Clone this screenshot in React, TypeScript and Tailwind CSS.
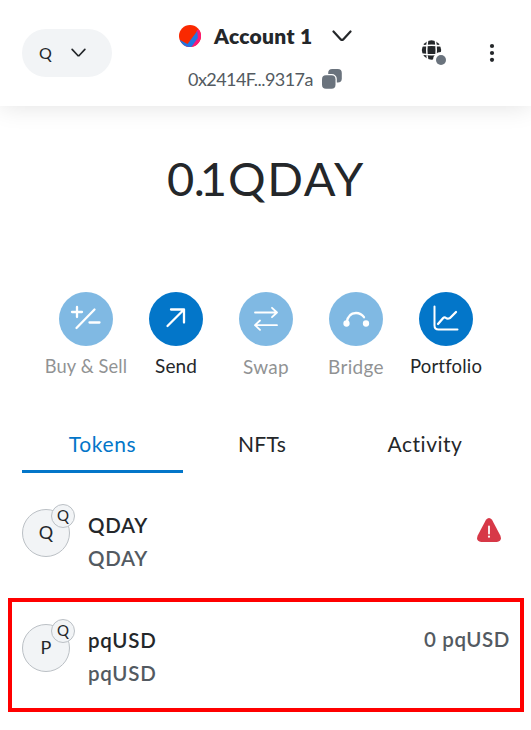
import React from "react";

function Chevron({ width }: { width: number }) {
  return (
    <svg width={width} height={width / 2 + 2} viewBox="0 0 20 12" fill="none" stroke="#24272a" strokeWidth="2.2" strokeLinecap="round" strokeLinejoin="round">
      <path d="M1.5 1.5 8.8 9.4Q10 10.6 11.2 9.4L18.5 1.5" />
    </svg>
  );
}

function Action({ label, disabled, spacing, children }: { label: string; disabled?: boolean; spacing: string; children: React.ReactNode }) {
  return (
    <div className={`flex w-[90px] flex-col items-center ${disabled ? "opacity-50" : ""}`}>
      <div className="flex size-[54px] items-center justify-center rounded-full bg-[#0376c9]">
        <svg width="54" height="54" viewBox="0 0 54 54" fill="none" stroke="white" strokeWidth="2.3" strokeLinecap="round" strokeLinejoin="round">
          {children}
        </svg>
      </div>
      <span className={`whitespace-nowrap leading-6 ${spacing}`}>{label}</span>
    </div>
  );
}

function TokenRow({ letter, name, spacing, children }: { letter: string; name: string; spacing: string; children: React.ReactNode }) {
  return (
    <div className="flex h-[115px] items-start pl-[22px] pr-[22px]">
      <div className="relative mt-[11px] flex size-12 items-center justify-center rounded-full border border-[#bbc0c5] bg-[#f2f4f6] pb-0.5 text-[18px]">
        {letter}
        <span className="absolute -top-[6px] left-[28px] flex size-6 items-center justify-center rounded-full border border-[#bbc0c5] bg-[#f2f4f6] pb-0.5 text-[15px]">Q</span>
      </div>
      <div className={`ml-[18px] mt-[11px] flex flex-col text-[20.5px] font-semibold leading-[33px] ${spacing}`}>
        <span>{name}</span>
        <span className="text-[#535a61]">{name}</span>
      </div>
      <div className="ml-auto mt-[11px]">{children}</div>
    </div>
  );
}

export default function App() {
  return (
    <div className="relative h-[730px] w-[531px] overflow-hidden bg-white font-['Lato','Liberation_Sans',sans-serif] text-[#24272a]">
      <header className="relative flex h-[106px] bg-white shadow-[0_0_24px_rgba(0,0,0,0.12)]">
        <div className="ml-[22px] mt-[29px] flex h-12 w-[90px] items-center rounded-full bg-[#f2f4f6] pl-[17px]">
          <span className="w-[14px] pb-px text-[16px]">Q</span>
          <span className="ml-[18px]"><Chevron width={15} /></span>
        </div>
        <div className="ml-[67px] w-[190px]">
          <div className="mt-[22px] flex h-7 items-center">
            <svg width="22" height="22" viewBox="0 0 22 22">
              <defs><clipPath id="avatar"><circle cx="11" cy="11" r="11" /></clipPath></defs>
              <g clipPath="url(#avatar)">
                <path fill="#fa2900" d="M0 0h22v22H0z" />
                <path fill="#fb1879" d="M18 5 22 4V22H6L15 14z" />
                <path fill="#2376e1" d="M18.3 6 18.8 13 12.5 22H4L0 14.5 8.5 19z" />
              </g>
            </svg>
            <span className="ml-[13px] w-[98px] whitespace-nowrap text-[21px] font-extrabold tracking-[0.3px]">Account 1</span>
            <span className="ml-[20px]"><Chevron width={20} /></span>
          </div>
          <div className="ml-[9px] mt-[15px] flex h-7 items-center text-[#535a61]">
            <span className="w-[126px] whitespace-nowrap text-[18px] tracking-[-0.55px]">0x2414F...9317a</span>
            <svg width="20" height="20" viewBox="0 0 20 20" className="ml-[8px]">
              <rect x="6.2" y="0" width="13.6" height="13.6" rx="4" fill="#6a737d" />
              <rect x="-1.2" y="5" width="16" height="16" rx="5" fill="white" />
              <rect y="6.2" width="13.5" height="13.5" rx="4" fill="#6a737d" />
            </svg>
          </div>
        </div>
        <div className="ml-[52px] mt-[40px]">
          <svg width="26" height="26" viewBox="0 0 26 26">
            <circle cx="10.5" cy="10" r="9.7" fill="#24272a" />
            <path d="M6.7 0Q4.8 10 6.7 20M14.3 0Q16.2 10 14.3 20M0 6.1Q10.5 4.5 21 6.1M0 13.9Q10.5 15.5 21 13.9" stroke="white" strokeWidth="1.5" fill="none" />
            <circle cx="20" cy="20" r="8" fill="white" />
            <circle cx="20" cy="20" r="5" fill="#6a737d" />
          </svg>
        </div>
        <svg width="6" height="20" viewBox="0 0 6 20" className="ml-[42px] mt-[43px]" fill="#24272a">
          <circle cx="3" cy="3" r="2.1" /><circle cx="3" cy="10" r="2.1" /><circle cx="3" cy="16.8" r="2.1" />
        </svg>
      </header>

      <main>
        <div className="flex h-[186px] pl-[167px] pt-[42px] text-[47px] leading-[60px]">
          <span className="w-[61px] whitespace-nowrap"><span className="tracking-[-0.5px]">0</span><span className="tracking-[-5px]">.</span><span className="tracking-[-2px]">1</span></span>
          <span className="tracking-[1.7px]">QDAY</span>
        </div>
        <section className="flex h-[88px] pl-[41px]">
          <Action label="Buy & Sell" disabled spacing="mt-[8px] text-[18.3px] tracking-[0.1px]">
            <path d="M13 20h10M18 15v10M17.5 36 35.5 17.5M30.5 30.5h10" />
          </Action>
          <Action label="Send" spacing="mt-[8px] text-[19px] tracking-[0.1px]">
            <path d="M18.5 34 35 17.5M22 17.5h13v13" />
          </Action>
          <Action label="Swap" disabled spacing="mt-[9px] text-[19px] tracking-[0.3px]">
            <path strokeWidth="1.8" d="M16 20.5h22M33 15.8l5 4.7-5 4.7M38 33.2H16M21 28.5l-5 4.7 5 4.7" />
          </Action>
          <Action label="Bridge" disabled spacing="mt-[9px] text-[19px] tracking-[0.3px]">
            <path d="M17.5 31Q19 21 27 21Q32 21 35 25.2" />
            <circle cx="17.5" cy="31.5" r="2" fill="white" /><circle cx="37" cy="31.5" r="2" fill="white" />
          </Action>
          <Action label="Portfolio" spacing="mt-[8px] text-[18.5px] tracking-[0.2px]">
            <path strokeWidth="2" d="M15.5 14.5v19q0 4 4 4H38.5" />
            <path d="M19 32 24.2 26Q25.5 24.7 27 26T31 26L37 20" />
          </Action>
        </section>

        <nav className="mt-[38px] flex h-[55px] pl-[22px] text-[21px] leading-[52px]">
          <div className="w-[161px] border-b-[3px] border-[#0376c9] text-center tracking-[0.6px] text-[#0376c9]">Tokens</div>
          <div className="w-[158px] text-center tracking-[0.3px]">NFTs</div>
          <div className="w-[168px] text-center tracking-[0.5px]">Activity</div>
        </nav>

        <section className="pt-[25px]">
          <TokenRow letter="Q" name="QDAY" spacing="tracking-[0.7px]">
            <svg width="24" height="24" viewBox="0 0 24 24" className="mr-[8px] mt-[9px]">
              <path d="M9 1.8Q12-1.8 15 1.8L23.3 17.5Q25.5 23 19.8 24H4.2Q-1.5 23 .7 17.5z" fill="#d73847" />
              <path d="M12 8.5v7" stroke="white" strokeWidth="1.8" strokeLinecap="round" /><circle cx="12" cy="18.7" r="1.1" fill="white" />
            </svg>
          </TokenRow>
          <TokenRow letter="P" name="pqUSD" spacing="tracking-[0.75px]">
            <span className="-mr-px block whitespace-nowrap text-[20.5px] font-semibold leading-[31px] tracking-[0.6px] text-[#535a61]">0 pqUSD</span>
          </TokenRow>
        </section>
      </main>
      <div className="pointer-events-none absolute left-[8px] top-[598px] h-[114px] w-[516px] border-4 border-[#ff0000]" />
    </div>
  );
}
